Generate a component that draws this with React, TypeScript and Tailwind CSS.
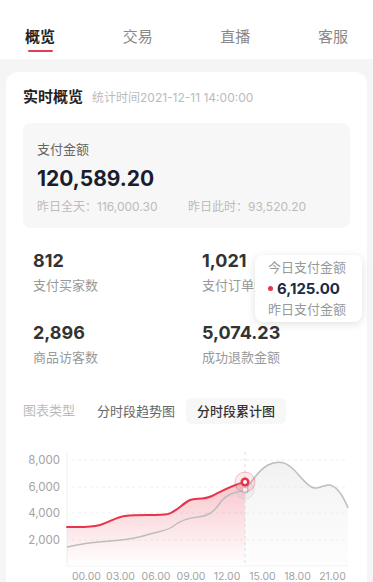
import React from 'react';

const tabs = ['概览', '交易', '直播', '客服'];

const stats = [
  { value: '812', label: '支付买家数' },
  { value: '1,021', label: '支付订单数' },
  { value: '2,896', label: '商品访客数' },
  { value: '5,074.23', label: '成功退款金额' },
];

const yTicks = [
  { label: '8,000', y: 460 },
  { label: '6,000', y: 487 },
  { label: '4,000', y: 513 },
  { label: '2,000', y: 540 },
];

const xTicks = [
  { label: '00.00', x: 86.5 },
  { label: '03.00', x: 120.5 },
  { label: '06.00', x: 156 },
  { label: '09.00', x: 191 },
  { label: '12.00', x: 227 },
  { label: '15.00', x: 262.5 },
  { label: '18.00', x: 297.5 },
  { label: '21.00', x: 332.5 },
];

// today's line (red), up to the current hour
const redLine =
  'M67 527 C80 527 88 528 100 525 C110 522 116 517 125 516 C140 514 158 516 168 514 C176 512 182 504 190 500 C196 498 204 500 212 496 C222 491 232 485 245 482';

// yesterday's line (gray), whole day
const grayLeft =
  'M67 547 C80 544 95 542 110 541 C125 540 138 538 150 534 C160 531 166 531 172 527 C178 522 186 518 198 517 C208 516 214 512 220 503 C226 494 236 492 245 490';
const grayRight =
  'M245 490 C252 482 258 470 268 465 C276 461 284 461 292 468 C300 475 306 486 314 488 C320 489 324 484 330 485 C338 487 344 498 348 508';

const Chart: React.FC = () => (
  <svg
    viewBox="23 444 329 146"
    width={329}
    height={146}
    className="block mt-[20px]"
  >
    <defs>
      <linearGradient id="redFill" x1="0" y1="0" x2="0" y2="1">
        <stop offset="0%" stopColor="#e8334a" stopOpacity="0.28" />
        <stop offset="100%" stopColor="#e8334a" stopOpacity="0" />
      </linearGradient>
      <linearGradient id="grayFill" x1="0" y1="0" x2="0" y2="1">
        <stop offset="0%" stopColor="#e8e8e8" stopOpacity="0.6" />
        <stop offset="100%" stopColor="#f2f2f2" stopOpacity="0.15" />
      </linearGradient>
    </defs>

    {yTicks.map(t => (
      <g key={t.label}>
        <line x1={72} x2={348} y1={t.y} y2={t.y} stroke="#eeeeee" strokeWidth={1} strokeDasharray="3 3" />
        <text x={60} y={t.y + 4} textAnchor="end" fontSize={11.5} fill="#a3a3a3">
          {t.label}
        </text>
      </g>
    ))}

    <line x1={67} x2={67} y1={452} y2={566} stroke="#f0f0f0" strokeWidth={1} />
    <line x1={67} x2={348} y1={566} y2={566} stroke="#f3f3f3" strokeWidth={1} />

    <path d={`${redLine} L245 566 L67 566 Z`} fill="url(#redFill)" />
    <path d={`${grayRight} L348 566 L245 566 Z`} fill="url(#grayFill)" />

    <line x1={245} x2={245} y1={452} y2={566} stroke="#dddddd" strokeWidth={1} strokeDasharray="3 3" />

    <path d={grayLeft} fill="none" stroke="#bdbdbd" strokeWidth={1.5} />
    <path d={grayRight} fill="none" stroke="#bdbdbd" strokeWidth={1.5} />
    <path d={redLine} fill="none" stroke="#e8334a" strokeWidth={2} strokeLinecap="round" />

    <circle cx={245} cy={490} r={9} fill="#bbbbbb" fillOpacity={0.12} stroke="#bbbbbb" strokeOpacity={0.35} />
    <circle cx={245} cy={490} r={3} fill="#ffffff" stroke="#c8c8c8" strokeWidth={1.5} />

    <circle cx={245} cy={482} r={10} fill="#e8334a" fillOpacity={0.1} stroke="#e8334a" strokeOpacity={0.3} />
    <circle cx={245} cy={482} r={4.5} fill="#e8334a" />
    <circle cx={245} cy={482} r={2} fill="#ffffff" />

    {xTicks.map(t => (
      <text key={t.label} x={t.x} y={580} textAnchor="middle" fontSize={10.5} fill="#a3a3a3">
        {t.label}
      </text>
    ))}
  </svg>
);

export default function App() {
  return (
    <div className="min-h-screen bg-[#f5f5f5] font-['Inter','Noto_Sans_CJK_SC',sans-serif]">
      <div className="h-[59px] bg-white flex justify-between px-[25px]">
        {tabs.map((tab, i) => (
          <div key={tab} className="pt-[26px] flex flex-col items-center">
            <span
              className={`text-[15px] leading-[21px] ${
                i === 0 ? 'text-[#222222] font-semibold' : 'text-[#888888]'
              }`}
            >
              {tab}
            </span>
            {i === 0 && <div className="mt-[3px] h-[2px] w-[25px] rounded-full bg-[#e23c52]" />}
          </div>
        ))}
      </div>

      <div className="relative mx-[6px] mt-[13px] bg-white rounded-[12px] px-[17px] pt-[14px] pb-[20px]">
        <div className="flex items-baseline h-[22px] leading-[22px]">
          <span className="text-[15px] font-semibold text-[#222222]">实时概览</span>
          <span className="ml-[9px] text-[12px] text-[#bbbbbb]">统计时间2021-12-11 14:00:00</span>
        </div>

        <div className="mt-[15px] rounded-[8px] bg-[#f7f7f7] px-[14px] pt-[16px] pb-[12px]">
          <div className="text-[13px] leading-[20px] text-[#666666]">支付金额</div>
          <div className="mt-[6px] text-[21px] leading-[28px] font-bold text-[#1a1d2e]">120,589.20</div>
          <div className="mt-[5px] flex text-[12px] leading-[18px] text-[#bbbbbb]">
            <span className="w-[151px]">昨日全天：116,000.30</span>
            <span>昨日此时：93,520.20</span>
          </div>
        </div>

        <div className="mt-[21px] pl-[10px] grid grid-cols-[169px_1fr] gap-y-[27px]">
          {stats.map(s => (
            <div key={s.label}>
              <div className="text-[18px] leading-[24px] font-bold text-[#333333]">{s.value}</div>
              <div className="mt-[3px] text-[13px] leading-[18px] text-[#999999]">{s.label}</div>
            </div>
          ))}
        </div>

        <div className="mt-[32px] flex items-center h-[26px]">
          <span className="text-[13px] text-[#bbbbbb]">图表类型</span>
          <span className="ml-[11px] px-[11px] h-[26px] leading-[26px] text-[13px] text-[#666666]">分时段趋势图</span>
          <span className="px-[11px] h-[26px] leading-[26px] rounded-[6px] bg-[#f7f7f7] text-[13px] font-medium text-[#333333]">
            分时段累计图
          </span>
        </div>

        <Chart />

        <div className="absolute left-[249px] top-[183px] w-[107px] h-[67px] rounded-[8px] bg-white shadow-[0_2px_10px_rgba(0,0,0,0.12)] pl-[13px] flex flex-col justify-center">
          <div className="text-[13px] leading-[21px] text-[#999999]">今日支付金额</div>
          <div className="flex items-center leading-[21px]">
            <span className="w-[5px] h-[5px] rounded-full bg-[#e8334a]" />
            <span className="ml-[4px] text-[15px] font-bold text-[#1f2a44]">6,125.00</span>
          </div>
          <div className="text-[13px] leading-[21px] text-[#999999]">昨日支付金额</div>
        </div>
      </div>
    </div>
  );
}
